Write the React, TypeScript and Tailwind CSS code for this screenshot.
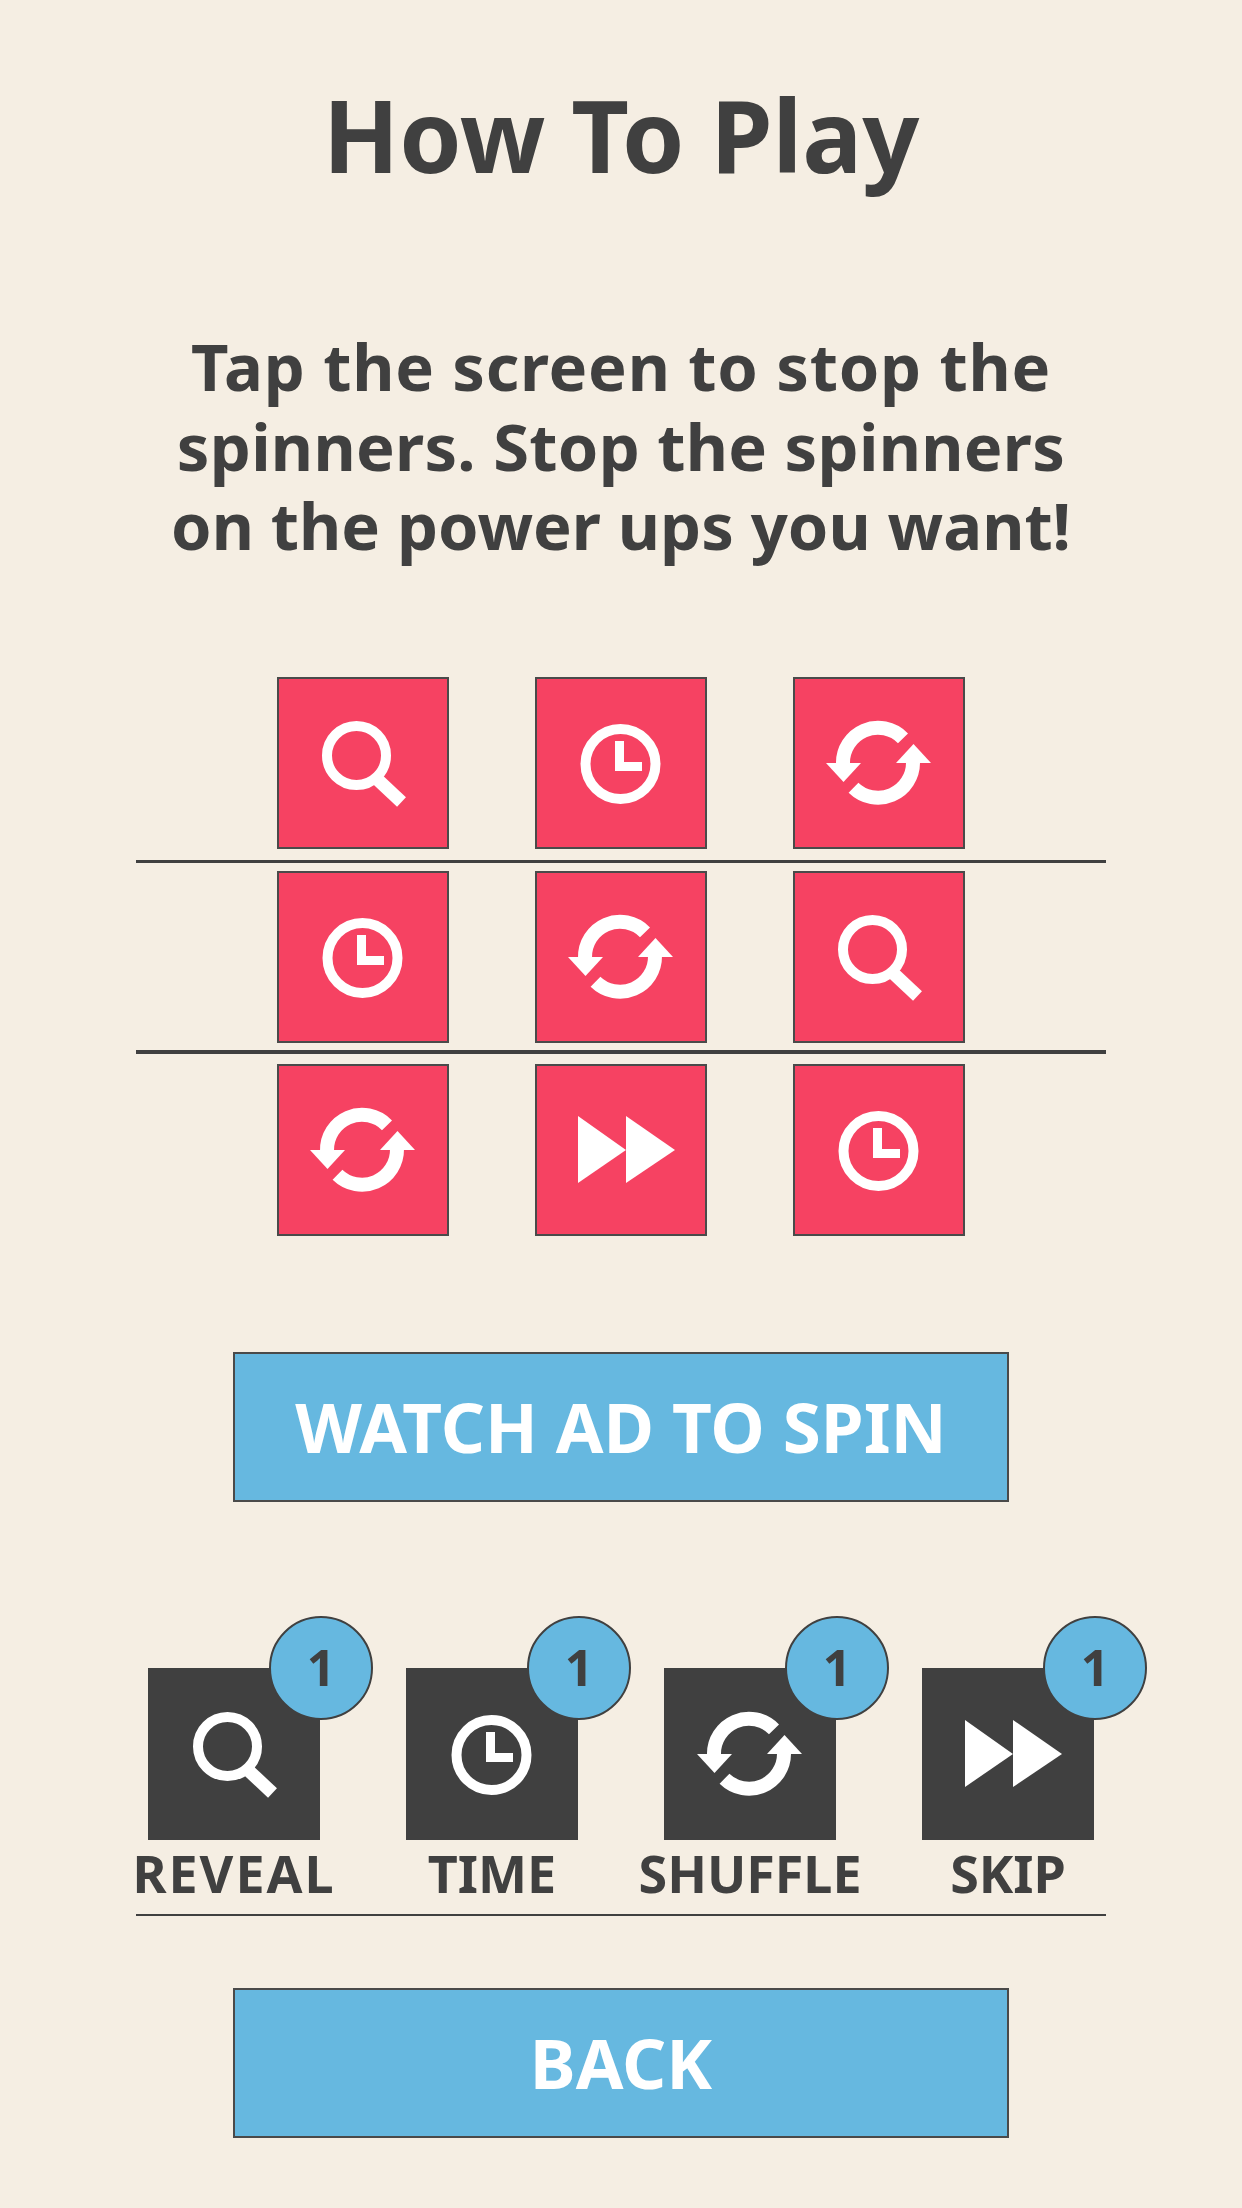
import React from "react";

type IconName = "search" | "clock" | "refresh" | "skip";

function Icon({ name }: { name: IconName }) {
  return (
    <svg viewBox="0 0 172 172" className="absolute inset-0 h-full w-full" fill="none">
      {name === "search" && (
        <g stroke="#fff">
          <circle cx="79.5" cy="78.5" r="29.5" strokeWidth="10" />
          <path d="M100.5 102.5 L124.5 125" strokeWidth="13" />
        </g>
      )}
      {name === "clock" && (
        <g>
          <circle cx="85.5" cy="87" r="35" stroke="#fff" strokeWidth="10" />
          <path d="M80 64H89V85H107V94H80Z" fill="#fff" />
        </g>
      )}
      {name === "refresh" && (
        <g>
          <path d="M110 61.3A35 35 0 0 0 50 87" stroke="#fff" strokeWidth="14" />
          <path d="M60.5 110.7A35 35 0 0 0 120 85" stroke="#fff" strokeWidth="14" />
          <path d="M33 86H68L50.5 105Z" fill="#fff" />
          <path d="M103 86H138L120.5 67Z" fill="#fff" />
        </g>
      )}
      {name === "skip" && (
        <g fill="#fff">
          <path d="M43 52V119L91 86Z" />
          <path d="M91 52V119L140 86Z" />
        </g>
      )}
    </svg>
  );
}

function Tile({ name }: { name: IconName }) {
  return (
    <div className="relative h-[172px] w-[172px] border-2 border-[#4a4a4a] bg-[#f64262]">
      <div className="absolute -inset-[2px]">
        <Icon name={name} />
      </div>
    </div>
  );
}

function TileRow({ names }: { names: IconName[] }) {
  return (
    <div className="flex gap-[86px]">
      {names.map((n, i) => (
        <Tile key={i} name={n} />
      ))}
    </div>
  );
}

function Power({ name, label, wide }: { name: IconName; label: string; wide?: boolean }) {
  return (
    <div className="flex w-[172px] flex-col items-center">
      <div className="relative h-[172px] w-[172px] bg-[#404040]">
        <Icon name={name} />
        <div className="absolute left-[121px] top-[-52px] flex h-[104px] w-[104px] items-center justify-center rounded-full border-2 border-[#404040] bg-[#66b8e0] text-[50px] font-bold text-[#404040]">
          1
        </div>
      </div>
      <div
        className={
          wide
            ? "mt-[3px] whitespace-nowrap text-[52px] font-bold leading-[60px] tracking-[2px] text-[#404040]"
            : "mt-[3px] whitespace-nowrap text-[52px] font-bold leading-[60px] text-[#404040]"
        }
      >
        {label}
      </div>
    </div>
  );
}

function Button({ children }: { children: React.ReactNode }) {
  return (
    <div className="flex h-[150px] w-[776px] items-center justify-center border-2 border-[#4a4a4a] bg-[#66b8e0] text-[69px] font-bold text-white">
      {children}
    </div>
  );
}

export default function App() {
  return (
    <div className="flex min-h-[2208px] w-[1242px] flex-col items-center bg-[#f5eee3] font-['Noto_Sans',sans-serif] text-[#404040]">
      <h1 className="mt-[86px] text-[100px] font-bold leading-[96px]">How To Play</h1>
      <p className="mt-[145px] w-[960px] text-center text-[65px] font-bold leading-[79.5px]">
        <span className="tracking-[0.75px]">Tap the screen to stop the</span>
        <br />
        <span className="tracking-[0.3px]">spinners. Stop the spinners</span>
        <br />
        on the power ups you want!
      </p>
      <div className="mt-[111px]">
        <TileRow names={["search", "clock", "refresh"]} />
      </div>
      <div className="mt-[11px] h-[3px] w-[970px] bg-[#404040]" />
      <div className="mt-[8px]">
        <TileRow names={["clock", "refresh", "search"]} />
      </div>
      <div className="mt-[7px] h-[4px] w-[970px] bg-[#404040]" />
      <div className="mt-[10px]">
        <TileRow names={["refresh", "skip", "clock"]} />
      </div>
      <div className="mt-[116px]">
        <Button>WATCH AD TO SPIN</Button>
      </div>
      <div className="mt-[166px] flex gap-[86px]">
        <Power name="search" label="REVEAL" wide />
        <Power name="clock" label="TIME" />
        <Power name="refresh" label="SHUFFLE" />
        <Power name="skip" label="SKIP" />
      </div>
      <div className="mt-[11px] h-[2px] w-[970px] bg-[#404040]" />
      <div className="mt-[72px]">
        <Button>BACK</Button>
      </div>
    </div>
  );
}
